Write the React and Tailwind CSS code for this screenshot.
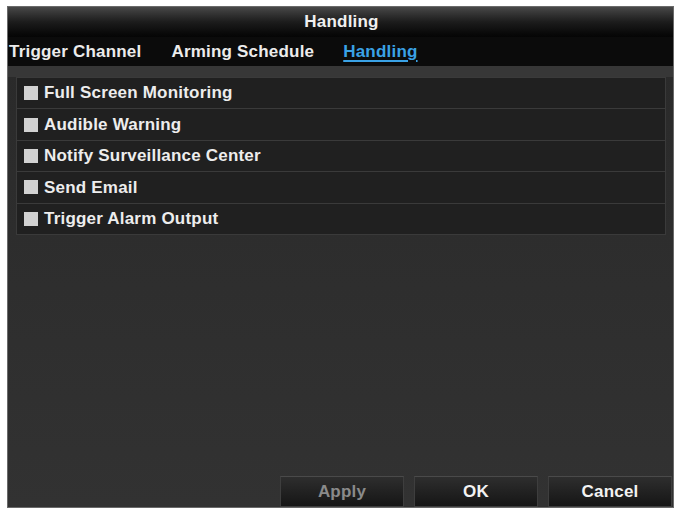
import React from "react";

const options = [
  "Full Screen Monitoring",
  "Audible Warning",
  "Notify Surveillance Center",
  "Send Email",
  "Trigger Alarm Output",
];

const tabs = [
  { label: "Trigger Channel", active: false },
  { label: "Arming Schedule", active: false },
  { label: "Handling", active: true },
];

const Button = ({ children, disabled }) => (
  <button
    className={
      "w-[124px] h-[31px] border border-[#3e3e3e] border-t-[#4a4a4a] bg-gradient-to-b from-[#2e2e2e] to-[#161616] text-[17px] font-bold " +
      (disabled ? "text-[#8a8a8a]" : "text-[#f2f2f2]")
    }
  >
    {children}
  </button>
);

const App = () => {
  return (
    <div className="w-[678px] h-[512px] bg-white pt-[6px] pl-[7px] font-['Liberation_Sans',Arial,sans-serif] tracking-[0.2px]">
      <div className="w-[667px] h-[502px] flex flex-col border border-[#6a6a6a] bg-[#2f2f2f]">
        {/* title bar */}
        <div className="h-[30px] flex items-center justify-center bg-gradient-to-b from-[#484848] via-[#1c1c1c] to-[#050505] text-[17px] font-bold text-[#f0f0f0]">
          <span className="ml-[2px] -mt-[1px]">Handling</span>
        </div>

        {/* tab strip */}
        <div className="h-[29px] flex items-center bg-[#0b0b0b] text-[17px] font-bold">
          {tabs.map((t, i) => (
            <span
              key={t.label}
              className={
                (i === 0 ? "ml-[1px] " : i === 1 ? "ml-[30px] " : "ml-[29px] ") +
                (t.active
                  ? "text-[#3aa2e6] underline decoration-2 underline-offset-[3px]"
                  : "text-[#ececec]")
              }
            >
              {t.label}
            </span>
          ))}
        </div>

        {/* body */}
        <div className="flex-1 flex flex-col bg-gradient-to-b from-[#2a2a2a] to-[#323232]">
          <div className="h-[11px] bg-[#373737]" />
          <div className="ml-[8px] mr-[7px] flex flex-col gap-px bg-[#3a3a3a] p-px">
            {options.map((o) => (
              <div
                key={o}
                className="h-[30.4px] flex items-center bg-[#202020] pl-[7px] text-[17px] font-bold text-[#ededed]"
              >
                <span className="w-[14px] h-[14px] bg-[#d2d2d2] mr-[6px] shrink-0" />
                {o}
              </div>
            ))}
          </div>

          <div className="flex-1" />

          <div className="flex justify-end gap-[10px] pr-[1px]">
            <Button disabled>Apply</Button>
            <Button>OK</Button>
            <Button>Cancel</Button>
          </div>
        </div>
      </div>
    </div>
  );
};

export default App;
